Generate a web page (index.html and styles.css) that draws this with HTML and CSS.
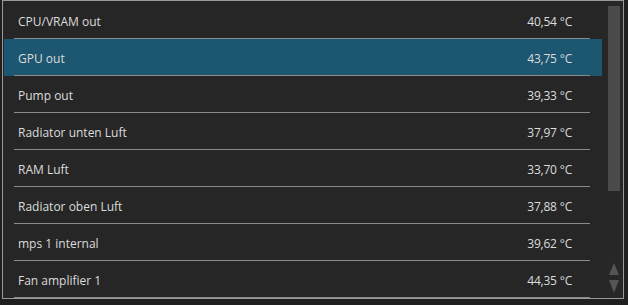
FILE: index.html
```html
<!DOCTYPE html>
<html>
<head>
<meta charset="utf-8">
<link rel="stylesheet" href="styles.css">
</head>
<body>
<div class="frame">
  <div class="list">
    <div class="row"><span class="name">CPU/VRAM out</span><span class="val">40,54 °C</span></div>
    <div class="row sel"><span class="name">GPU out</span><span class="val">43,75 °C</span></div>
    <div class="row"><span class="name">Pump out</span><span class="val">39,33 °C</span></div>
    <div class="row"><span class="name">Radiator unten Luft</span><span class="val">37,97 °C</span></div>
    <div class="row"><span class="name">RAM Luft</span><span class="val">33,70 °C</span></div>
    <div class="row"><span class="name">Radiator oben Luft</span><span class="val">37,88 °C</span></div>
    <div class="row"><span class="name">mps 1 internal</span><span class="val">39,62 °C</span></div>
    <div class="row"><span class="name">Fan amplifier 1</span><span class="val">44,35 °C</span></div>
  </div>
  <div class="scrollbar">
    <div class="thumb"></div>
    <div class="arrows">
      <svg width="10" height="31" viewBox="0 0 10 31">
        <polygon points="5,0 10,12 0,12" fill="#555"/>
        <polygon points="0,17 10,17 5,30" fill="#555"/>
      </svg>
    </div>
  </div>
</div>
</body>
</html>
```
FILE: styles.css
```css
html, body {
  margin: 0;
  padding: 0;
  background: #1f1f1f;
}
body {
  font-family: "Open Sans", "Noto Sans", sans-serif;
  font-size: 12px;
  color: #dcdcdc;
}
.frame {
  margin-left: 2px;
  width: 620px;
  height: 297px;
  border: 1px solid #9a9a9a;
  background: #262626;
  display: flex;
}
.list {
  width: 598px;
  margin-left: 1px;
  padding-top: 1px;
}
.row {
  height: 36px;
  box-sizing: content-box;
  display: flex;
  align-items: center;
  justify-content: space-between;
  padding: 0 30px 0 14px;
  border-bottom: 1px solid transparent;
  background-image: linear-gradient(#8a8a8a, #8a8a8a);
  background-size: 576px 1px;
  background-position: 10px 36px;
  background-repeat: no-repeat;
}
.row span {
  position: relative;
  top: 1px;
}
.val {
  letter-spacing: -0.2px;
}
.row.sel {
  background-color: #1c5670;
}
.scrollbar {
  width: 17px;
  margin-left: 3px;
  background: #272727;
  display: flex;
  flex-direction: column;
  align-items: center;
  padding-top: 5px;
  padding-bottom: 4px;
}
.thumb {
  width: 12px;
  height: 185px;
  background: #4b4b4b;
}
.arrows {
  margin-top: auto;
  display: flex;
}
```
